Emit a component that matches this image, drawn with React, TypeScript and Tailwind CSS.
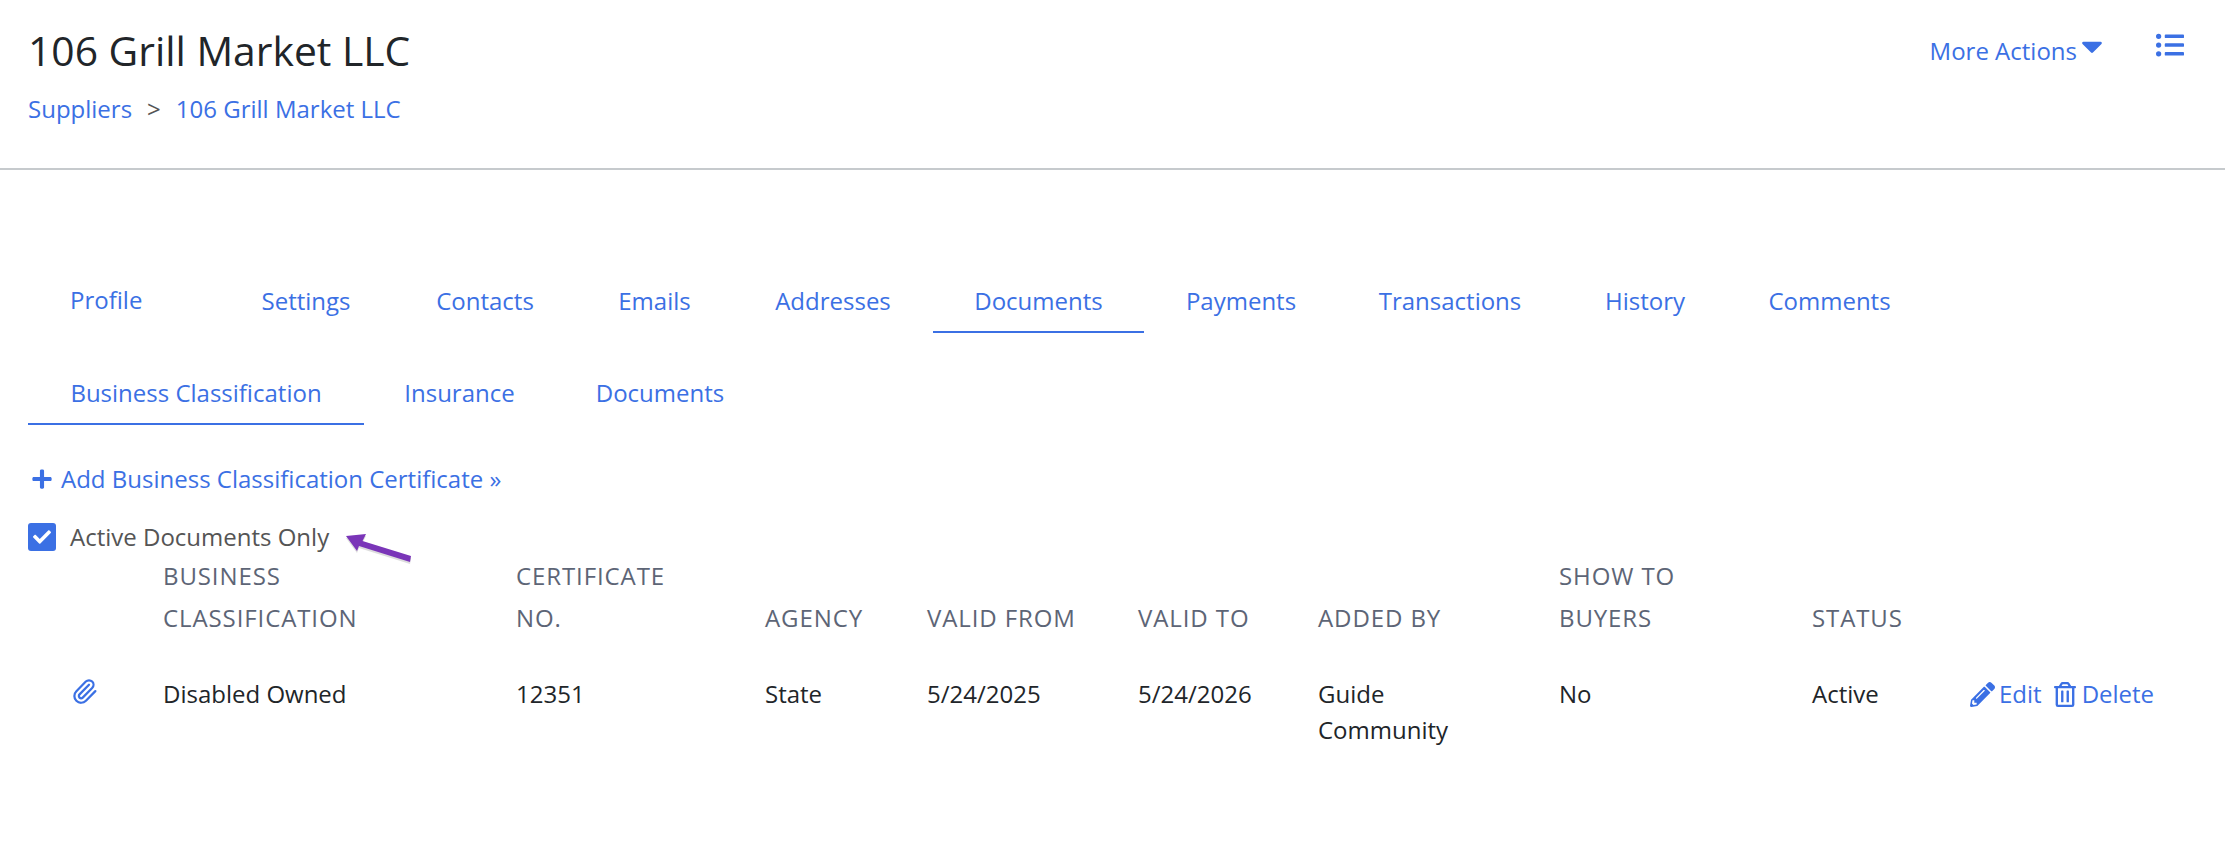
import { FaCaretDown, FaCheck, FaListUl, FaPencilAlt, FaPlus, FaRegTrashAlt } from "react-icons/fa";
import { Paperclip } from "lucide-react";

const tabs = [
  { label: "Profile", cls: "w-[190px] pl-[42px] text-left -mt-px pb-[13px]" },
  { label: "Settings", cls: "w-[176px] text-center pb-[12px]" },
  { label: "Contacts", cls: "w-[182px] text-center pb-[12px]" },
  { label: "Emails", cls: "w-[157px] text-center pb-[12px]" },
  { label: "Addresses", cls: "w-[200px] text-center pb-[12px]" },
  { label: "Documents", cls: "w-[211px] text-center pb-[12px] border-b-2 border-[#3b70e4]" },
  { label: "Payments", cls: "w-[194px] text-center pb-[12px]" },
  { label: "Transactions", cls: "w-[224px] text-center pb-[12px]" },
  { label: "History", cls: "w-[166px] text-center pb-[12px]" },
  { label: "Comments", cls: "w-[203px] text-center pb-[12px]" },
];

const subTabs = [
  { label: "Business Classification", cls: "w-[336px] border-b-2 border-[#3b70e4]" },
  { label: "Insurance", cls: "w-[191px]" },
  { label: "Documents", cls: "w-[210px]" },
];

export default function App() {
  return (
    <div className="min-h-[857px] bg-white font-['Open_Sans','Liberation_Sans',sans-serif] text-[24px] leading-[37px] text-[#212529]">
      <header className="h-[170px] border-b-2 border-[#c6cacd] px-7 pt-[26px]">
        <div className="flex items-start justify-between">
          <div>
            <h1 className="text-[40.8px] leading-[48px] text-[#212529]">106 Grill Market LLC</h1>
            <div className="mt-[16px] flex gap-[15px] text-[#3b70e4]">
              <a>Suppliers</a>
              <span className="text-[#555]">&gt;</span>
              <a>106 Grill Market LLC</a>
            </div>
          </div>
          <div className="flex items-start pr-[13px] text-[#3b70e4]">
            <a className="pt-[6px]">More Actions</a>
            <FaCaretDown className="ml-[3px] mt-[3px] h-[34px] w-[24px]" />
            <FaListUl className="ml-[52px] mt-[5px] h-[28px] w-[28px]" />
          </div>
        </div>
      </header>

      <main className="px-7 pt-[112px]">
        <nav className="flex text-[#3b70e4]">
          {tabs.map((t) => (
            <a key={t.label} className={t.cls}>{t.label}</a>
          ))}
        </nav>
        <nav className="mt-[41px] flex pb-[10px] text-[#3b70e4]">
          {subTabs.map((t) => (
            <a key={t.label} className={`pb-[12px] text-center ${t.cls}`}>{t.label}</a>
          ))}
        </nav>
        <a className="mt-[25px] flex items-center text-[#3b70e4]">
          <FaPlus className="ml-[3px] mr-[8px] h-[22px] w-[22px]" />
          Add Business Classification Certificate »
        </a>
        <label className="relative mt-[21px] flex items-center text-[#555]">
          <span className="mr-[14px] flex h-[28px] w-[28px] items-center justify-center rounded-[3px] bg-[#3b70e4] text-white">
            <FaCheck className="h-[18px] w-[18px]" />
          </span>
          Active Documents Only
          <svg viewBox="0 0 76 36" className="absolute left-[312px] top-[13px] h-[36px] w-[76px]">
            <path d="M6 5 L26 3 L22.5 10 L71 25 L70 31 L19 15 L17 20 Z" fill="#bbb" opacity="0.5" transform="translate(0 2)" />
            <path d="M6 5 L26 3 L22.5 10 L71 25 L70 31 L19 15 L17 20 Z" fill="#7a35b8" />
          </svg>
        </label>

        <table className="w-[2127px] table-fixed border-collapse text-left">
          <thead>
            <tr className="align-bottom leading-[42px] tracking-[0.9px] text-[#5d6576]">
              <th className="w-[135px] font-medium"></th>
              <th className="w-[353px] font-medium">BUSINESS<br />CLASSIFICATION</th>
              <th className="w-[249px] font-medium">CERTIFICATE<br />NO.</th>
              <th className="w-[162px] font-medium">AGENCY</th>
              <th className="w-[211px] font-medium">VALID FROM</th>
              <th className="w-[180px] font-medium">VALID TO</th>
              <th className="w-[241px] font-medium">ADDED BY</th>
              <th className="w-[253px] font-medium">SHOW TO<br />BUYERS</th>
              <th className="w-[158px] font-medium">STATUS</th>
              <th></th>
            </tr>
          </thead>
          <tbody>
            <tr className="align-top leading-[36px]">
              <td className="pt-[37px]">
                <Paperclip className="ml-[43px] mt-[2px] h-[27px] w-[27px] text-[#3b70e4]" />
              </td>
              <td className="pt-[37px]">Disabled Owned</td>
              <td className="pt-[37px]">12351</td>
              <td className="pt-[37px]">State</td>
              <td className="pt-[37px]">5/24/2025</td>
              <td className="pt-[37px]">5/24/2026</td>
              <td className="pt-[37px]">Guide<br />Community</td>
              <td className="pt-[37px]">No</td>
              <td className="pt-[37px]">Active</td>
              <td className="pt-[37px] text-[#3b70e4]">
                <div className="flex items-center whitespace-nowrap">
                  <FaPencilAlt className="mr-[4px] h-[25px] w-[25px]" />
                  Edit
                  <FaRegTrashAlt className="ml-[12px] mr-[6px] h-[25px] w-[22px]" />
                  Delete
                </div>
              </td>
            </tr>
          </tbody>
        </table>
      </main>
    </div>
  );
}
